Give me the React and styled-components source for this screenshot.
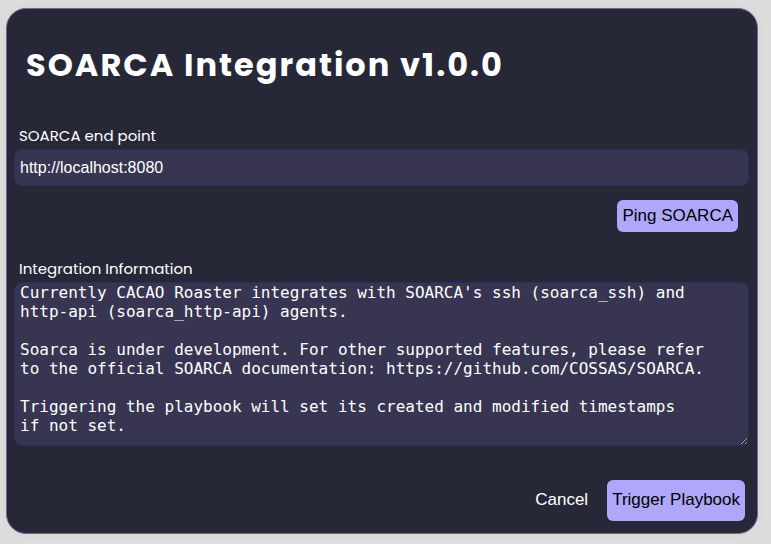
import React, { useState } from "react";
import styled, { createGlobalStyle } from "styled-components";

const GlobalStyle = createGlobalStyle`
  * { box-sizing: border-box; }
  body {
    margin: 0;
    min-height: 100vh;
    background: #dddddd;
    font-family: Poppins, Inter, sans-serif;
  }
`;

const Page = styled.main`
  padding: 8px 13px 10px 6px;
`;

const Dialog = styled.form`
  display: flex;
  flex-direction: column;
  padding: 32px 8px 12px 7px;
  border: 1px solid #6c6799;
  border-radius: 20px;
  background: #272837;
  color: #ffffff;
  box-shadow: 0 0 12px rgba(0, 0, 0, 0.04);
`;

const Title = styled.h1`
  margin: 0 12px 36px;
  font-size: 32px;
  line-height: 48px;
  font-weight: 700;
  letter-spacing: 2px;
`;

const Label = styled.label`
  padding: 0 0 2px 5px;
  font-size: 15px;
  line-height: 22px;
`;

const fieldStyles = `
  width: 100%;
  border: 1px solid #2c2b5a;
  border-radius: 8px;
  background: #373551;
  color: #ffffff;
  font-size: 16px;
  outline: none;
`;

const TextInput = styled.input`
  ${fieldStyles}
  height: 37px;
  padding: 0 5px;
  font-family: "Liberation Sans", Arial, sans-serif;
`;

const TextArea = styled.textarea`
  ${fieldStyles}
  height: 164px;
  padding: 0 5px;
  font-family: "DejaVu Sans Mono", Menlo, monospace;
  line-height: 19px;
  resize: both;
`;

const Actions = styled.div`
  display: flex;
  justify-content: flex-end;
  gap: 14px;
  padding-right: ${(p) => p.$inset}px;
  margin: ${(p) => p.$top}px 0 ${(p) => p.$bottom}px;
`;

const Button = styled.button`
  height: ${(p) => (p.$tall ? 41 : 32)}px;
  padding: 0 5px 1px;
  border: 0;
  border-radius: 6px;
  background: ${(p) => (p.$plain ? "transparent" : "#afa8fa")};
  color: ${(p) => (p.$plain ? "#ffffff" : "#000000")};
  font: 17px "Liberation Sans", Arial, sans-serif;
  cursor: pointer;
`;

const INFORMATION = `Currently CACAO Roaster integrates with SOARCA's ssh (soarca_ssh) and
http-api (soarca_http-api) agents.

Soarca is under development. For other supported features, please refer
to the official SOARCA documentation: https://github.com/COSSAS/SOARCA.

Triggering the playbook will set its created and modified timestamps
if not set.`;

export default function App() {
  const [endpoint, setEndpoint] = useState("http://localhost:8080");

  return (
    <>
      <GlobalStyle />
      <Page>
        <Dialog onSubmit={(e) => e.preventDefault()}>
          <Title>SOARCA Integration v1.0.0</Title>
          <Label htmlFor="endpoint">SOARCA end point</Label>
          <TextInput
            id="endpoint"
            value={endpoint}
            onChange={(e) => setEndpoint(e.target.value)}
          />
          <Actions $inset={11} $top={14} $bottom={26}>
            <Button type="button">Ping SOARCA</Button>
          </Actions>
          <Label htmlFor="information">Integration Information</Label>
          <TextArea id="information" readOnly spellCheck={false} value={INFORMATION} />
          <Actions $inset={4} $top={34} $bottom={0}>
            <Button type="button" $plain $tall>Cancel</Button>
            <Button type="submit" $tall>Trigger Playbook</Button>
          </Actions>
        </Dialog>
      </Page>
    </>
  );
}
